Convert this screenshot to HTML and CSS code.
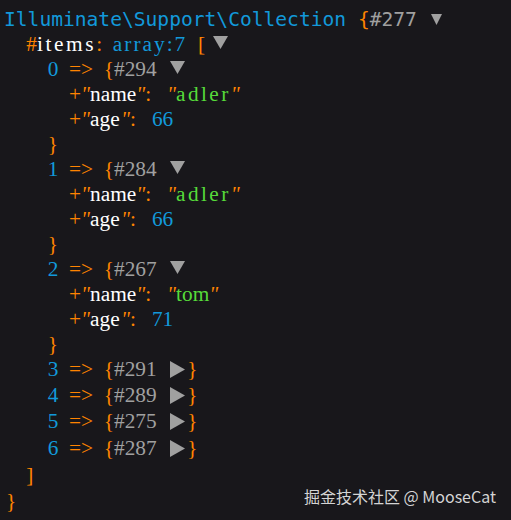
FILE: index.html
```html
<!DOCTYPE html>
<html>
<head>
<meta charset="utf-8">
<link rel="stylesheet" href="styles.css">
</head>
<body>
<div class="dump">
<div class="ln head"><span class="note">Illuminate\Support\Collection</span> <span class="p">{</span><span class="ref">#277</span> <span class="tog"><svg class="t-head" width="11" height="11" viewBox="0 0 11 11"><polygon points="0,0 11,0 5.5,11"/></svg></span></div>
<div class="ln lv1"><span class="p">#</span><span class="key sp1">items</span><span class="p">:</span> <span class="note sp2">array:7</span> <span class="p open">[</span><span class="tog"><svg class="t-down" width="15" height="13" viewBox="0 0 15 13"><polygon points="0,0 15,0 7.5,13"/></svg></span></div>
<div class="ln lv2"><span class="idx">0</span> <span class="p">=&gt;</span> <span class="p">{</span><span class="ref">#294</span> <span class="tog"><svg class="t-down" width="15" height="13" viewBox="0 0 15 13"><polygon points="0,0 15,0 7.5,13"/></svg></span></div>
<div class="ln lv3 prop"><span class="p">+</span><span class="q">"</span><span class="key">name</span><span class="q">"</span><span class="p">:</span> <span class="q">"</span><span class="str wide">adler</span><span class="q">"</span></div>
<div class="ln lv3 prop"><span class="p">+</span><span class="q">"</span><span class="key">age</span><span class="q">"</span><span class="p">:</span> <span class="num">66</span></div>
<div class="ln lv2"><span class="p">}</span></div>
<div class="ln lv2"><span class="idx">1</span> <span class="p">=&gt;</span> <span class="p">{</span><span class="ref">#284</span> <span class="tog"><svg class="t-down" width="15" height="13" viewBox="0 0 15 13"><polygon points="0,0 15,0 7.5,13"/></svg></span></div>
<div class="ln lv3 prop"><span class="p">+</span><span class="q">"</span><span class="key">name</span><span class="q">"</span><span class="p">:</span> <span class="q">"</span><span class="str wide">adler</span><span class="q">"</span></div>
<div class="ln lv3 prop"><span class="p">+</span><span class="q">"</span><span class="key">age</span><span class="q">"</span><span class="p">:</span> <span class="num">66</span></div>
<div class="ln lv2"><span class="p">}</span></div>
<div class="ln lv2"><span class="idx">2</span> <span class="p">=&gt;</span> <span class="p">{</span><span class="ref">#267</span> <span class="tog"><svg class="t-down" width="15" height="13" viewBox="0 0 15 13"><polygon points="0,0 15,0 7.5,13"/></svg></span></div>
<div class="ln lv3 prop"><span class="p">+</span><span class="q">"</span><span class="key">name</span><span class="q">"</span><span class="p">:</span> <span class="q">"</span><span class="str">tom</span><span class="q">"</span></div>
<div class="ln lv3 prop"><span class="p">+</span><span class="q">"</span><span class="key">age</span><span class="q">"</span><span class="p">:</span> <span class="num">71</span></div>
<div class="ln lv2"><span class="p">}</span></div>
<div class="ln lv2"><span class="idx">3</span> <span class="p">=&gt;</span> <span class="p">{</span><span class="ref">#291</span> <span class="tog"><svg class="t-right" width="15" height="17" viewBox="0 0 15 17"><polygon points="0,0 15,8.5 0,17"/></svg></span><span class="p">}</span></div>
<div class="ln lv2 loose"><span class="idx">4</span> <span class="p">=&gt;</span> <span class="p">{</span><span class="ref">#289</span> <span class="tog"><svg class="t-right" width="15" height="17" viewBox="0 0 15 17"><polygon points="0,0 15,8.5 0,17"/></svg></span><span class="p">}</span></div>
<div class="ln lv2 loose"><span class="idx">5</span> <span class="p">=&gt;</span> <span class="p">{</span><span class="ref">#275</span> <span class="tog"><svg class="t-right" width="15" height="17" viewBox="0 0 15 17"><polygon points="0,0 15,8.5 0,17"/></svg></span><span class="p">}</span></div>
<div class="ln lv2 loose"><span class="idx">6</span> <span class="p">=&gt;</span> <span class="p">{</span><span class="ref">#287</span> <span class="tog"><svg class="t-right" width="15" height="17" viewBox="0 0 15 17"><polygon points="0,0 15,8.5 0,17"/></svg></span><span class="p">}</span></div>
<div class="ln lv1 loose"><span class="p">]</span></div>
<div class="ln loose"><span class="p brace">}</span></div>
</div>
<div class="mark">掘金技术社区 @ MooseCat</div>
</body>
</html>
```

FILE: styles.css
```css
html, body {
  margin: 0;
  background: #18171B;
}

body {
  height: 520px;
  overflow: hidden;
}

.dump {
  padding: 6.5px 0 0 5px;
  font-family: "Liberation Serif", "Times New Roman", serif;
  font-size: 21.33px;
  line-height: 25px;
  word-spacing: 5.33px;
  color: #FFFFFF;
}

.ln {
  height: 25px;
  white-space: pre;
}

.head {
  font-family: "DejaVu Sans Mono", monospace;
  font-size: 19.6px;
  word-spacing: 0;
  margin-left: -1px;
}

.lv1 { padding-left: 21.33px; }
.lv2 { padding-left: 42.67px; }
.lv3 { padding-left: 64px; }

.loose {
  height: 26.7px;
  line-height: 26.7px;
}

.prop { word-spacing: 10.67px; }

.p { color: #FF8400; }
.note { color: #1299DA; }
.ref { color: #A0A0A0; }
.idx, .num { color: #1299DA; }
.str { color: #56DB3A; }
.key { color: #FFFFFF; }

.prop .key {
  display: inline-block;
  min-width: 31px;
}

.q {
  color: #FF8400;
  font-style: italic;
}

.sp1 { letter-spacing: 2.6px; }
.sp2 { letter-spacing: 2px; }
.wide { letter-spacing: 2.4px; }

.open { padding-right: 5px; }

.tog {
  margin-left: 3px;
}

.tog svg {
  fill: #A0A0A0;
}

.head .tog { margin-left: 2px; }

.t-head { vertical-align: 1px; }
.t-down { vertical-align: 2px; }
.t-right { vertical-align: -2px; margin-right: 2px; }

.brace { margin-left: 1px; }

.mark {
  position: absolute;
  right: 15px;
  bottom: 14px;
  font-family: "Noto Sans CJK SC", "Noto Sans", sans-serif;
  font-size: 16px;
  line-height: 20px;
  color: #D4D4D4;
  white-space: pre;
}
```
